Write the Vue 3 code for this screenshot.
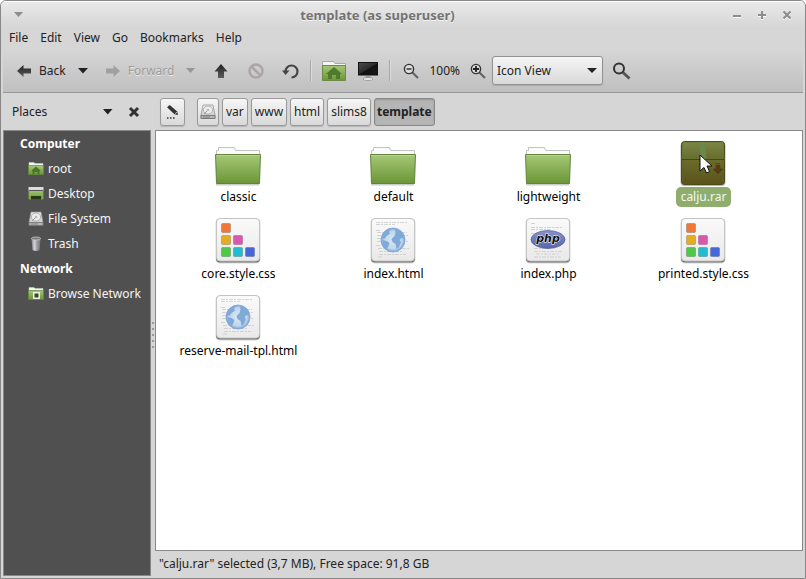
<script setup>
import { ref } from 'vue'

const menus = ['File', 'Edit', 'View', 'Go', 'Bookmarks', 'Help']
const crumbs = ['var', 'www', 'html', 'slims8', 'template']
const view = ref('Icon View')
const selected = ref('calju.rar')

const places = [
  { title: 'Computer', items: [
    { name: 'root', icon: 'home' },
    { name: 'Desktop', icon: 'desktop' },
    { name: 'File System', icon: 'disk' },
    { name: 'Trash', icon: 'trash' }
  ] },
  { title: 'Network', items: [{ name: 'Browse Network', icon: 'network' }] }
]

const files = [
  { name: 'classic', type: 'folder' },
  { name: 'default', type: 'folder' },
  { name: 'lightweight', type: 'folder' },
  { name: 'calju.rar', type: 'archive' },
  { name: 'core.style.css', type: 'css' },
  { name: 'index.html', type: 'html' },
  { name: 'index.php', type: 'php' },
  { name: 'printed.style.css', type: 'css' },
  { name: 'reserve-mail-tpl.html', type: 'html' }
]

const swatches = [
  { x: 7, y: 7, fill: '#f0773a' },
  { x: 7, y: 19, fill: '#e5ac22' },
  { x: 19, y: 19, fill: '#d957ae' },
  { x: 7, y: 31, fill: '#4fc84a' },
  { x: 19, y: 31, fill: '#1fbdd0' },
  { x: 31, y: 31, fill: '#4667dc' }
]
</script>

<template>
  <div class="window">
    <svg class="defs" width="0" height="0" aria-hidden="true">
      <defs>
        <linearGradient id="gDark" x1="0" y1="0" x2="0" y2="1"><stop offset="0" stop-color="#222" /><stop offset="1" stop-color="#5c5c5c" /></linearGradient>
        <linearGradient id="gGreen" x1="0" y1="0" x2="0" y2="1"><stop offset="0" stop-color="#a5c877" /><stop offset="1" stop-color="#6b9636" /></linearGradient>
        <linearGradient id="gPaper" x1="0" y1="0" x2="0" y2="1"><stop offset="0" stop-color="#fafafa" /><stop offset="1" stop-color="#e9e9e9" /></linearGradient>
        <linearGradient id="gMetal" x1="0" y1="0" x2="0" y2="1"><stop offset="0" stop-color="#eee" /><stop offset="1" stop-color="#c4c4c4" /></linearGradient>
        <linearGradient id="gCan" x1="0" y1="0" x2="1" y2="0"><stop offset="0" stop-color="#85858a" /><stop offset=".35" stop-color="#d5d5d9" /><stop offset=".6" stop-color="#9c9ca2" /><stop offset="1" stop-color="#77777c" /></linearGradient>
        <linearGradient id="gBox" x1="0" y1="0" x2="0" y2="1"><stop offset="0" stop-color="#6c7732" /><stop offset=".45" stop-color="#6a6c2a" /><stop offset="1" stop-color="#5a521b" /></linearGradient>
        <linearGradient id="gFlap" x1="0" y1="0" x2="0" y2="1"><stop offset="0" stop-color="#7a8545" /><stop offset="1" stop-color="#666d2d" /></linearGradient>
        <linearGradient id="gScreen" x1="0" y1="0" x2="1" y2="1"><stop offset="0" stop-color="#4c4c4c" /><stop offset=".5" stop-color="#2b2b2b" /><stop offset=".55" stop-color="#111" /><stop offset="1" stop-color="#1a1a1a" /></linearGradient>
        <radialGradient id="gGlobe"><stop offset="0" stop-color="#dde8f5" /><stop offset=".75" stop-color="#c0d5ec" /><stop offset="1" stop-color="#7aa4d5" /></radialGradient>
        <linearGradient id="gPhp" x1="0" y1="0" x2="0" y2="1"><stop offset="0" stop-color="#8792c8" /><stop offset="1" stop-color="#5767ad" /></linearGradient>
        <g id="diskShape">
          <path d="M3 1h10l2 10v3.500H1V11z" fill="url(#gMetal)" stroke="#8e8e8e" stroke-width=".7" />
          <ellipse cx="8" cy="6" rx="4.700" ry="4" fill="#ededed" stroke="#aaa" stroke-width=".9" />
          <circle cx="8" cy="6" r="1.300" fill="#bbb" />
          <path d="M4 10l3-3" stroke="#999" />
          <path d="M1 11.500h14v3H1z" fill="#b5b5b5" stroke="#666" stroke-width=".7" />
          <path d="M3 13h7" stroke="#777" stroke-width=".8" />
        </g>
        <g id="smallFolder">
          <path d="M1 1.500h5l1 1h8V7H1z" fill="#f5f5f5" stroke="#ccc" stroke-width=".5" />
          <path d="M.5 4.500h15v9H.5z" fill="url(#gGreen)" stroke="#628a36" stroke-width=".7" />
        </g>
      </defs>
    </svg>

    <header class="titlebar">
      <button class="wbtn menu-btn" aria-label="Window menu"><svg width="10" height="6"><path d="M0 0h9L4.500 5z" fill="#8d8d8d" /></svg></button>
      <h1>template (as superuser)</h1>
      <button class="wbtn" aria-label="Minimize"><svg width="12" height="12"><path d="M2 8.500h8" stroke="#fff" /><path d="M2 7h8" stroke="#8d8d8d" stroke-width="2" /></svg></button>
      <button class="wbtn" aria-label="Maximize"><svg width="12" height="12"><path d="M2 7.500h8M5 10.500h2" stroke="#fff" /><path d="M2 6h8M6 2v8" stroke="#8d8d8d" stroke-width="2" /></svg></button>
      <button class="wbtn" aria-label="Close"><svg width="12" height="12"><path d="M2.500 3.500l7 7M9.500 3.500l-7 7" stroke="#fff" stroke-width="2" /><path d="M2.500 2.500l7 7M9.500 2.500l-7 7" stroke="#8d8d8d" stroke-width="2.200" /></svg></button>
    </header>

    <nav class="menubar">
      <button v-for="m in menus" :key="m">{{ m }}</button>
    </nav>

    <div class="toolbar">
      <button class="tool labelled">
        <svg width="20" height="20"><path d="M3 10l6.500-6v3.500H17v5H9.500V16z" fill="url(#gDark)" /></svg><span>Back</span>
      </button>
      <button class="tool drop" aria-label="Back history"><svg width="10" height="6"><path d="M0 0h10L5 5.500z" fill="#222" /></svg></button>
      <button class="tool labelled spaced" disabled>
        <svg width="20" height="20"><path d="M17 10l-6.500-6v3.500H3v5h7.500V16z" fill="#a0a0a0" /></svg><span>Forward</span>
      </button>
      <button class="tool drop" aria-label="Forward history" disabled><svg width="10" height="6"><path d="M0 0h9L4.500 5z" fill="#969696" /></svg></button>
      <button class="tool spaced" aria-label="Up"><svg width="20" height="20"><path d="M10 3l6.500 7.500H13V17H7v-6.500H3.500z" fill="url(#gDark)" /></svg></button>
      <button class="tool wide" aria-label="Stop" disabled><svg width="20" height="20"><circle cx="10" cy="10" r="6.500" fill="none" stroke="#aaa6a6" stroke-width="2.500" /><path d="M5.500 5.500l9 9" stroke="#aaa6a6" stroke-width="2.500" /></svg></button>
      <button class="tool wide" aria-label="Reload"><svg width="20" height="20"><path d="M4.500 10.500a6 6 0 1 1 6 6" fill="none" stroke="#444" stroke-width="2.200" /><path d="M1 9.500h7.500L4.500 14z" fill="#444" /></svg></button>
      <i class="sep"></i>
      <button class="tool" aria-label="Home"><svg width="24" height="24">
        <path d="M.5 2.500h11l1.500 2h10.500V10H.5z" fill="#f5f5f5" stroke="#999" stroke-width=".8" />
        <path d="M.5 6.500h23v15H.5z" fill="url(#gGreen)" stroke="#6b8a45" />
        <path d="M12 8l8 7h-2v5h-4v-4h-4v4H6v-5H4z" fill="#4f7a2c" />
      </svg></button>
      <button class="tool spaced" aria-label="Computer"><svg width="24" height="24">
        <path d="M2 3h20v13.500H2z" fill="#111" /><path d="M3 4h18v11H3z" fill="url(#gScreen)" />
        <path d="M10 17h4l.5 2h-5z" fill="#999" /><ellipse cx="12" cy="20" rx="5" ry="1.500" fill="#eee" stroke="#888" stroke-width=".7" />
      </svg></button>
      <i class="sep"></i>
      <button class="tool zoom-out" aria-label="Zoom out"><svg width="20" height="20"><path d="M11 11l6 6" stroke="#666" stroke-width="2.200" /><circle cx="8" cy="8" r="4.600" fill="#ddd" stroke="#333" stroke-width="1.400" /><path d="M5.500 8h5" stroke="#333" stroke-width="1.600" /></svg></button>
      <span class="percent">100%</span>
      <button class="tool" aria-label="Zoom in"><svg width="20" height="20"><path d="M11 11l6 6" stroke="#666" stroke-width="2.200" /><circle cx="8" cy="8" r="4.600" fill="#ddd" stroke="#333" stroke-width="1.400" /><path d="M5 8h6M8 5v6" stroke="#222" stroke-width="1.800" /></svg></button>
      <span class="select">
        <select v-model="view" aria-label="View mode"><option>Icon View</option><option>List View</option><option>Compact View</option></select>
      </span>
      <button class="tool search" aria-label="Search"><svg width="24" height="24"><path d="M13 13.500l6.500 6" stroke="#555" stroke-width="3" /><circle cx="9" cy="9.500" r="5" fill="none" stroke="#333" stroke-width="2" /></svg></button>
    </div>

    <div class="location">
      <div class="side-head">
        <button class="side-pick">Places<svg width="10" height="6"><path d="M0 0h9.500L4.700 5.500z" fill="#222" /></svg></button>
        <button class="side-close" aria-label="Close side pane"><svg width="12" height="12"><path d="M2 2l8 8M10 2l-8 8" stroke="#333" stroke-width="3" /></svg></button>
      </div>
      <button class="path edit" aria-label="Edit location"><svg width="16" height="16"><path d="M2 3.200L4.700 1l7.500 6.500.8 3.500-3.500-.7z" fill="#333" /><path d="M10 9.700l2-1.500" stroke="#ddd" stroke-width=".8" /><path d="M2 14h1.500M5 14h1.500M8 14h1.500" stroke="#333" stroke-width="1.500" /></svg></button>
      <div class="crumbs">
        <button class="path root" aria-label="File System"><svg width="16" height="16"><use href="#diskShape" /></svg></button>
        <button v-for="c in crumbs" :key="c" class="path" :class="{ current: c === 'template' }">{{ c }}</button>
      </div>
    </div>

    <div class="body">
      <aside class="sidebar">
        <section v-for="g in places" :key="g.title">
          <h2>{{ g.title }}</h2>
          <a v-for="p in g.items" :key="p.name" href="#">
            <svg width="16" height="16">
              <use v-if="p.icon === 'disk'" href="#diskShape" />
              <template v-else-if="p.icon === 'trash'">
                <path d="M3.500 2.500L4.500 14q3.500 2 7 0l1-11.500z" fill="url(#gCan)" />
                <ellipse cx="8" cy="2.500" rx="4.700" ry="1.500" fill="#77777c" stroke="#ccc" stroke-width=".8" />
              </template>
              <template v-else-if="p.icon === 'desktop'">
                <path d="M1 4h14v9H1z" fill="url(#gGreen)" stroke="#8fb45e" stroke-width=".7" />
                <path d="M.5 1h15v3.500H.5z" fill="#dcdcdc" /><path d="M1 4.500h14" stroke="#555" />
                <path d="M3 10h10v3.500H3z" fill="#263815" />
              </template>
              <template v-else>
                <use href="#smallFolder" />
                <path v-if="p.icon === 'home'" d="M8 5.500l5 4.500h-1.500v3h-2v-2h-3v2h-2v-3H3z" fill="#4b732c" />
                <template v-else><path d="M5 6h7v7H5z" fill="#eee" /><path d="M6.500 7.500h4v4h-4z" fill="#354b25" /></template>
              </template>
            </svg>
            {{ p.name }}
          </a>
        </section>
      </aside>

      <div class="grip"><i v-for="n in 5" :key="n"></i></div>

      <div class="content">
        <main class="pane">
          <a v-for="f in files" :key="f.name" href="#" class="file" :class="{ selected: f.name === selected }" @click.prevent="selected = f.name">
            <span class="thumb">
              <svg width="48" height="48">
                <template v-if="f.type === 'folder'">
                  <path d="M2 45.500h43" stroke="#999" stroke-width="2" opacity=".5" />
                  <path d="M2.500 24V11.500h2V8.500h16l1 3h24V24z" fill="#fbfbfb" stroke="#bcbcbc" stroke-width=".9" />
                  <path d="M1.500 15.500h45l-1 29h-43z" fill="url(#gGreen)" stroke="#587c31" stroke-width=".9" />
                  <path d="M2.500 16.500h43" stroke="#bcd79b" stroke-width=".8" />
                </template>
                <template v-else-if="f.type === 'archive'">
                  <rect x="1.500" y="3" width="45" height="44" rx="4" fill="#000" opacity=".3" />
                  <rect x="2.500" y="2.500" width="43" height="43" rx="3" fill="url(#gBox)" stroke="#4d4a1c" />
                  <path d="M4 3.500h40l1.500 17H2.500z" fill="url(#gFlap)" />
                  <path d="M21 3h6v18h-6z" fill="#6b874a" />
                  <path d="M3 20.500h42" stroke="#464717" />
                  <path d="M5 21l-1.500 22M43 21l1.500 22" stroke="#5f6427" stroke-width=".8" />
                  <path d="M36 24.500h5M37 26h4v4h3l-5 5-5-5h3z" fill="#573b14" stroke="#573b14" stroke-width=".6" />
                </template>
                <template v-else>
                  <rect x="1.500" y="2.500" width="45" height="45" rx="4.500" fill="#000" opacity=".15" />
                  <rect x="2" y="3" width="44" height="43.500" rx="4" fill="#555" opacity=".8" />
                  <rect x="2.500" y="2.500" width="43" height="42.500" rx="3.500" fill="url(#gPaper)" stroke="#c4c4c4" />
                  <template v-if="f.type === 'css'">
                    <rect v-for="s in swatches" :key="`${s.x}-${s.y}`" :x="s.x + .5" :y="s.y + .5" width="9" height="9" rx="1" :fill="s.fill" stroke="#000" stroke-opacity=".18" />
                  </template>
                  <template v-else>
                    <g stroke="#cacaca" stroke-width=".8" stroke-dasharray="4 1 2 1">
                      <path v-if="f.type === 'html'" d="M7 6.500h31M7 8.500h19M7 14.500h4M8 16.500h30M8 19.500h31M8 22.500h28M8 25.500h32M7 29.500h5M9 32.500h31M10 35.500h24M10 38.500h27M9 41h5" />
                      <path v-else d="M7 7.500h4M7 11.500h31M7 13.500h19M7 17.500h31M10 32.500h16M10 35.500h28M12 38h24M10 41h27" />
                    </g>
                    <template v-if="f.type === 'html'">
                      <circle cx="24" cy="24" r="12" fill="url(#gGlobe)" stroke="#7ba4d3" stroke-width=".8" />
                      <path d="M13 20q2-5 7-7.500l2 1-2 2 1 2-4 3-1 2-3 0zM13.500 24l4 1 3 2-1 3-2.500 4q-3.500-4-3.500-10zM26 13q6 1 8 6l1 4-2.500-1-2 2 1.500 2-2 5-2.500 2-1-5-3-2-1-3 3-3 1-3z" fill="#7faad7" />
                    </template>
                    <template v-else>
                      <ellipse cx="24" cy="23.500" rx="17" ry="9" fill="url(#gPhp)" stroke="#4a5795" stroke-width=".7" />
                      <text x="24" y="26" text-anchor="middle" class="php">php</text>
                    </template>
                  </template>
                </template>
              </svg>
              <svg v-if="f.type === 'archive'" class="pointer" width="14" height="20"><path d="M1 1v16l4-3.500 2.500 5.500 3-1.500L8 12h5z" fill="#fff" stroke="#111" /></svg>
            </span>
            <span class="name">{{ f.name }}</span>
          </a>
        </main>
        <footer>"calju.rar" selected (3,7 MB), Free space: 91,8 GB</footer>
      </div>
    </div>
  </div>
</template>

<style>
body { margin: 0; background: #fff; }
</style>

<style scoped>
* { box-sizing: border-box; }
.window {
  min-height: 100vh;
  display: flex;
  flex-direction: column;
  border: 1px solid #888;
  border-radius: 6px 6px 0 0;
  background: #d6d6d6;
  color: #222;
  font: 12px/20px "Noto Sans", sans-serif;
  overflow: hidden;
}
.defs { position: absolute; }
svg { display: block; flex: none; }
button { font: inherit; color: inherit; background: none; border: 0; padding: 0; margin: 0; }
a { color: inherit; text-decoration: none; }
.titlebar {
  display: flex;
  align-items: center;
  height: 26px;
  padding: 0 6px 0 5px;
  border-top: 1px solid #fff;
  background: linear-gradient(#e9e9e9, #d6d6d6);
}
.titlebar h1 {
  flex: 1;
  margin: 0;
  text-align: center;
  font-size: 13px;
  font-weight: 700;
  color: #737373;
  text-shadow: 0 1px #f4f4f4;
}
.wbtn { width: 25px; height: 20px; display: flex; align-items: center; justify-content: center; }
.menubar { display: flex; gap: 12px; padding: 0 8px; height: 22px; align-items: center; }
.toolbar {
  display: flex;
  align-items: center;
  height: 44px;
  margin: 0 2px;
  padding-left: 11px;
  border-bottom: 1px solid #979797;
  background: linear-gradient(#d6d6d6, #c0c0c0);
}
.tool { display: flex; align-items: center; justify-content: center; }
.tool:disabled { color: #9b9b9b; text-shadow: 0 1px #e8e8e8; }
.labelled { gap: 5px; }
.drop { width: 20px; height: 20px; margin-left: 7px; }
.spaced { margin-left: 10px; }
.wide { margin-left: 15px; }
.sep { width: 2px; height: 21px; margin: 0 10px 0 9px; background: #a8a8a8; border-right: 1px solid #dcdcdc; }
.percent { margin: 0 8px; }
.select { position: relative; margin-left: 4px; }
.select::after {
  content: "";
  position: absolute;
  right: 6px;
  top: 12px;
  border: 5px solid transparent;
  border-top-color: #222;
  border-bottom: 0;
  pointer-events: none;
}
select {
  display: block;
  width: 111px;
  height: 29px;
  padding: 0 20px 0 4px;
  appearance: none;
  font: inherit;
  color: inherit;
  border: 1px solid #929292;
  border-radius: 3px;
  background: linear-gradient(#f5f5f5, #d9d9d9);
  box-shadow: 0 1px 1px #aaa;
}
.search { margin-left: 7px; }
.location { display: flex; align-items: center; height: 37px; padding: 0 2px; }
.side-head { display: flex; align-items: center; width: 148px; padding: 0 10px 0 9px; }
.side-pick { flex: 1; display: flex; align-items: center; justify-content: space-between; padding-right: 14px; }
.side-close { padding: 0 1px; }
.path {
  height: 28px;
  padding: 0 3px;
  border: 1px solid #999;
  border-radius: 3px;
  background: linear-gradient(#f6f6f6, #d9d9d9);
  box-shadow: 0 1px 1px #b4b4b4;
}
.edit { width: 25px; margin-left: 9px; padding-left: 4px; }
.crumbs { display: flex; gap: 3px; margin-left: 12px; }
.root { padding: 0 2px; }
.current { font-weight: 700; background: #b5b5b5; border-color: #888; box-shadow: inset 0 1px 2px #999; padding: 0 2px; }
.body { flex: 1; display: flex; padding: 0 2px; }
.sidebar { width: 148px; margin-bottom: 2px; background: #505050; color: #f5f5f5; border: 1px solid #888; }
.sidebar h2 { margin: 0; padding-left: 16px; font-size: 12px; line-height: 25px; color: #fff; }
.sidebar a { display: flex; align-items: center; gap: 4px; height: 25px; padding-left: 24px; white-space: nowrap; }
.grip { width: 4px; display: flex; flex-direction: column; align-items: center; justify-content: center; gap: 4px; padding-bottom: 38px; }
.grip i { width: 2px; height: 2px; background: #999; }
.content { flex: 1; display: flex; flex-direction: column; }
.pane {
  flex: 1;
  display: grid;
  grid-template-columns: repeat(auto-fill, 155px);
  align-content: start;
  row-gap: 9px;
  padding: 8px 0 8px 5px;
  background: #fff;
  color: #000;
  border: 1px solid #888;
}
.file { display: flex; flex-direction: column; align-items: center; }
.thumb { position: relative; padding-right: 2px; }
.pointer { position: absolute; left: 20px; top: 15px; }
.name { padding: 0 5px; border-radius: 5px; }
.selected .name { background: #8fae6e; color: #f4f8ee; }
.php { font: italic 700 11px "DejaVu Sans", sans-serif; fill: #111; stroke: #fff; stroke-width: 1px; paint-order: stroke; }
footer { height: 27px; padding: 2px 4px; line-height: 22px; }
</style>
